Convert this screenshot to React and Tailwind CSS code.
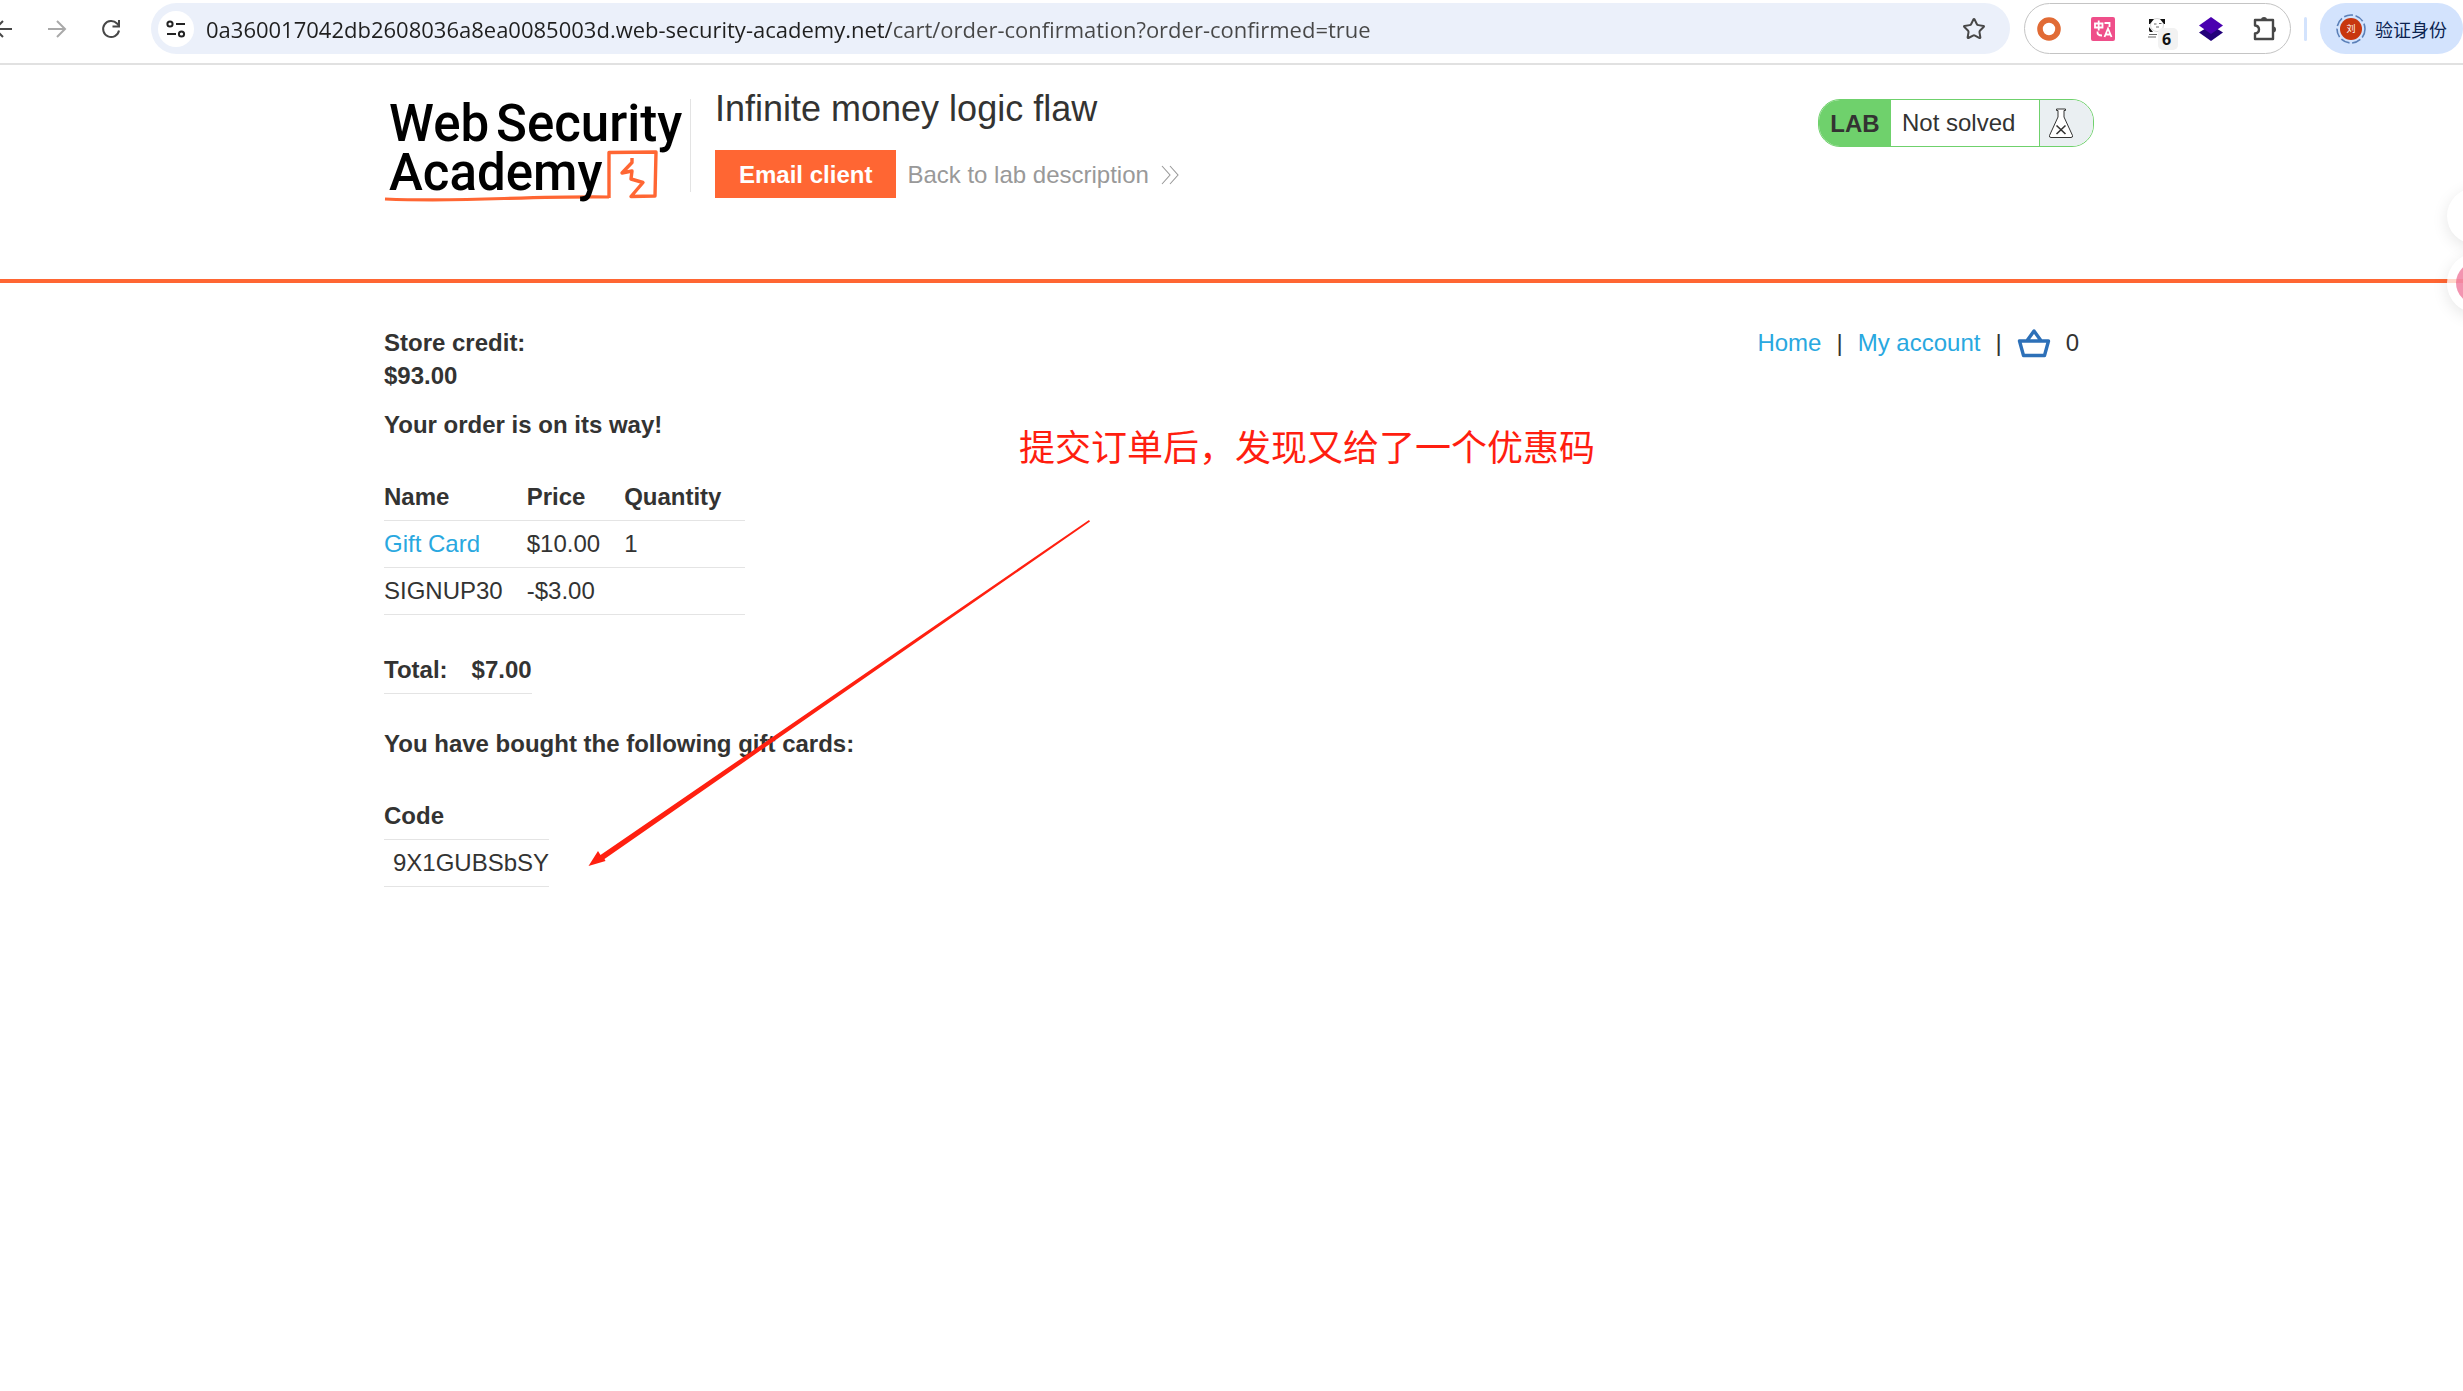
import React from "react";
import { Star } from "lucide-react";

function ArrowIcon({ className, flip }) {
  return (
    <svg viewBox="0 0 20 20" className={className} fill="none" stroke="currentColor" strokeWidth="2">
      {flip ? <path d="M20 10H3M11 2L3 10L11 18" /> : <path d="M1 10H18M10 2L18 10L10 18" />}
    </svg>
  );
}

function ReloadIcon() {
  return (
    <svg viewBox="0 0 20 20" className="size-5" fill="none" stroke="currentColor" strokeWidth="2">
      <path d="M18 11.500A8 8 0 1 1 16 4.500L18 7" />
      <path d="M18 1V7.500H11.500" />
    </svg>
  );
}

function TuneIcon() {
  return (
    <svg viewBox="0 0 20 20" className="size-5" fill="none" stroke="#222" strokeWidth="2">
      <circle cx="4" cy="5" r="2.600" />
      <path d="M10 5H19M1 15H10" />
      <circle cx="15.500" cy="15" r="2.600" />
    </svg>
  );
}

function Toolbar() {
  return (
    <div className="flex h-[65px] items-start overflow-hidden border-b-2 border-[#e1e1e1] bg-white pt-[3px] text-[#474747]">
      <div className="flex h-[51px] w-[151px] shrink-0 items-center">
        <button aria-label="Back" className="-ml-2 w-5 shrink-0"><ArrowIcon className="size-5" flip /></button>
        <button aria-label="Forward" className="ml-[35px] text-[#a9a9a9]"><ArrowIcon className="size-5" /></button>
        <button aria-label="Reload" className="ml-[34px]"><ReloadIcon /></button>
      </div>
      <div className="flex h-[51px] flex-1 items-center rounded-full bg-[#ebf0fa] pr-6 pl-[7px]">
        <button aria-label="Site information" className="flex size-9 items-center justify-center rounded-full bg-white">
          <TuneIcon />
        </button>
        <input
          aria-label="Address"
          readOnly
          className="ml-3 min-w-0 flex-1 bg-[linear-gradient(to_right,#1f1f1f_684px,#474747_684px)] bg-clip-text font-['Open_Sans',sans-serif] text-[22px] text-transparent outline-none"
          defaultValue="0a360017042db2608036a8ea0085003d.web-security-academy.net/cart/order-confirmation?order-confirmed=true"
        />
        <button aria-label="Bookmark this page"><Star className="size-6" strokeWidth={2} strokeLinejoin="miter" /></button>
      </div>
      <div className="ml-[14px] flex h-[51px] w-[267px] items-center gap-[30px] rounded-full border border-[#c4c4c4] pl-3">
        <button aria-label="Recorder">
          <svg viewBox="0 0 24 24" className="size-6"><circle cx="12" cy="12" r="9" fill="#fff" stroke="#e16b35" strokeWidth="5.600" /></svg>
        </button>
        <button aria-label="Translate">
          <svg viewBox="0 0 24 24" className="size-6" fill="none" stroke="#fff" strokeWidth="1.800">
            <rect width="24" height="24" rx="2" fill="#ef4f8a" stroke="none" />
            <path d="M4 6.500H11.500V10.500H4ZM7.700 3.500V13.500M13.500 6H18.500V10M6.500 14.500Q6 18.500 11 18.500M13.500 20L17 11.500L20.500 20M14.500 17.500H19.500" />
          </svg>
        </button>
        <button aria-label="Panda tools, 6" className="mt-2 flex w-6 pl-[3px]">
          <svg viewBox="0 0 30 34" className="h-[34px] w-[30px] shrink-0">
            <circle cx="9" cy="9" r="6.500" fill="#fff" stroke="#bbb" strokeWidth="0.600" />
            <path d="M1 3H6L2 8H1ZM12 3H17V8H16ZM1 11L5 16H2Q1 15 1 14Z" fill="#111" />
            <path d="M6 8H8.500M11 7.500H13.500M8 11H11M1 18.500H9M0 21H8" stroke="#666" strokeWidth="1" />
            <rect x="10" y="12" width="20" height="22" rx="5" fill="#f2f2f2" />
            <text x="18.500" y="29" textAnchor="middle" fontSize="16" fontWeight="700" fontFamily="Open Sans" fill="#111">6</text>
          </svg>
        </button>
        <button aria-label="Layers">
          <svg viewBox="0 0 24 24" className="size-6"><path d="M0 15.500L12 8L24 15.500L12 24Z" fill="#22007a" /><path d="M0 8.500L12 0L24 8.500L12 17Z" fill="#4a00b0" /></svg>
        </button>
        <button aria-label="Extensions">
          <svg viewBox="0 0 24 26" className="h-[26px] w-6">
            <path d="M2 4H20V23H2V17.500Q6 17 6 13.500Q6 10 2 9.500Z" fill="none" stroke="currentColor" strokeWidth="2.400" strokeLinejoin="round" />
            <path d="M8 4A3 3 0 0 1 14 4ZM20 10.500A3 3 0 0 1 20 16.500Z" fill="currentColor" />
          </svg>
        </button>
      </div>
      <div className="mt-[14px] ml-[13px] h-6 w-[3px] rounded-full bg-[#d3e3fd]" />
      <button className="ml-[13px] flex h-[51px] w-[143px] items-center gap-[9px] rounded-full bg-[#d3e3fd] pl-4 font-['Noto_Sans_CJK_SC',sans-serif] text-lg text-[#0b2350]">
        <svg viewBox="0 0 30 30" className="size-[30px] shrink-0">
          <circle cx="15" cy="15" r="14" fill="none" stroke="#5b80b8" strokeWidth="1.600" strokeDasharray="9 2.700" />
          <circle cx="15" cy="15" r="11" fill="#c8370f" />
          <text x="15" y="18" textAnchor="middle" fontSize="9" fontFamily="Noto Sans CJK SC" fill="#fff">刘</text>
        </svg>
        <span className="whitespace-nowrap">验证身份</span>
      </button>
    </div>
  );
}

function AcademyLogo() {
  return (
    <svg viewBox="0 0 304 112" className="h-28 w-[304px]" role="img" aria-label="Web Security Academy">
      <g fontFamily="Roboto" fontWeight="500" fontSize="51" fill="#000">
        <text x="5" y="48">Web</text>
        <text x="112" y="48">Security</text>
      </g>
      <g fill="none" stroke="#ff6633" strokeLinejoin="round">
        <path d="M225 105V59.500L272 59L271 103L247 103.500L259 89.500L247 86L248 78L238 80L248 69.500V65" strokeWidth="3.400" />
        <path d="M1 106Q50 108 120 105.500Q190 103.500 225 104" strokeWidth="3.200" />
      </g>
      <text x="5" y="97" fontFamily="Roboto" fontWeight="500" fontSize="51" fill="#000">Academy</text>
    </svg>
  );
}

function LabHeader() {
  return (
    <header className="h-[218px] border-b-4 border-[#ff6633] pl-[15px]">
      <div className="mx-auto flex max-w-[1710px] items-start pt-7">
        <div className="flex w-[306px] shrink-0 items-start">
          <AcademyLogo />
        </div>
        <div className="mt-[6px] h-[93px] w-px shrink-0 bg-[#e3e3e3]" />
        <div className="ml-6">
          <h2 className="text-4xl leading-8">Infinite money logic flaw</h2>
          <div className="mt-[25px] flex items-center gap-[11px]">
            <button className="h-12 bg-[#ff6633] px-6 pt-px font-bold text-white">Email client</button>
            <a href="#lab" className="flex items-center gap-3 pt-px text-[#999]">
              Back to lab description
              <svg viewBox="0 0 18 20" className="h-5 w-[18px]" fill="none" stroke="#999" strokeWidth="1.100">
                <path d="M1 1L9 10L1 19M9 1L17 10L9 19" />
              </svg>
            </a>
          </div>
        </div>
        <div className="mt-[6px] ml-auto flex h-12 items-stretch overflow-hidden rounded-[22px] border border-[#6fd16c]">
          <p className="flex w-[72px] items-center justify-center bg-[#6fd16c] pt-px font-bold">LAB</p>
          <p className="flex w-[148px] items-center pl-[11px]">Not solved</p>
          <span className="flex w-[54px] items-center border-l border-[#6fd16c] bg-[#eaeff2] pl-[9px]">
            <svg viewBox="0 0 24 30" className="h-[30px] w-6" fill="#fff" stroke="#333332" strokeWidth="1">
              <path d="M7.500 1H16.500V2.500H15V9L23.500 27.500Q24 29.500 22 29.500H2Q0 29.500 0.500 27.500L9 9V2.500H7.500Z" />
              <path d="M7.500 17.500L16.500 26M16.500 17.500L7.500 26" strokeWidth="1.600" />
            </svg>
          </span>
        </div>
      </div>
    </header>
  );
}

const th = "pr-6 pb-[9px] pt-[9px] text-left font-bold";
const td = "pr-6 py-[9px]";
const row = "border-b border-[#e4e4e4]";

export default function App() {
  return (
    <div className="relative min-h-screen overflow-hidden bg-white font-['Liberation_Sans',Arial,sans-serif] text-2xl leading-7 text-[#333332]">
      <Toolbar />
      <LabHeader />
      <main className="pl-[15px]">
        <div className="mx-auto max-w-[1710px] pt-[43px]">
          <div className="flex items-start justify-between">
            <p className="font-bold leading-[33px]">
              Store credit:
              <br />
              $93.00
            </p>
            <nav className="flex items-center gap-[15px] pr-[15px] leading-[33px]">
              <a href="#home" className="text-[#29a8e0]">Home</a>
              <span>|</span>
              <a href="#account" className="text-[#29a8e0]">My account</a>
              <span>|</span>
              <a href="#cart" aria-label="Basket">
                <svg viewBox="0 0 34 30" className="h-[30px] w-[34px]" fill="none" stroke="#2d70b8" strokeWidth="3.400" strokeLinejoin="round" strokeLinecap="round">
                  <path d="M2.500 13H31.500L27.500 27.500H6.500ZM10.500 12L17 3L23.500 12" />
                </svg>
              </a>
              <span>0</span>
            </nav>
          </div>
          <h4 className="mt-[19px] font-bold leading-7">Your order is on its way!</h4>
          <table className="mt-[35px]">
            <thead>
              <tr className={row}>
                <th className={th}>Name</th>
                <th className={th}>Price</th>
                <th className={th}>Quantity</th>
              </tr>
            </thead>
            <tbody>
              <tr className={row}>
                <td className={td}><a href="#gift" className="text-[#29a8e0]">Gift Card</a></td>
                <td className={td}>$10.00</td>
                <td className={td}>1</td>
              </tr>
              <tr className={row}>
                <td className={td}>SIGNUP30</td>
                <td className={td}>-$3.00</td>
                <td className={td}></td>
              </tr>
            </tbody>
          </table>
          <table className="mt-8">
            <tbody>
              <tr className={row}>
                <th className={th}>Total:</th>
                <td className="py-[9px] font-bold">$7.00</td>
              </tr>
            </tbody>
          </table>
          <h4 className="mt-9 font-bold">You have bought the following gift cards:</h4>
          <table className="mt-[35px]">
            <thead>
              <tr className={row}><th className={th}>Code</th></tr>
            </thead>
            <tbody>
              <tr className={row}><td className="py-[9px] pl-[9px]">9X1GUBSbSY</td></tr>
            </tbody>
          </table>
        </div>
      </main>

      <p className="absolute top-[425px] left-[1019px] font-['Noto_Sans_CJK_SC',sans-serif] text-4xl leading-10 whitespace-nowrap text-[#ff1e10]">
        提交订单后，发现又给了一个优惠码
      </p>
      <svg viewBox="0 0 502 347" className="pointer-events-none absolute top-[520px] left-[588px] h-[347px] w-[502px]" fill="#ff2010">
        <path d="M501 0L502 1.500L16.500 339L17.500 341L0.500 346L10 331L12.500 335Z" />
      </svg>
      <div className="absolute top-[188px] -right-10 size-14 rounded-full bg-white shadow-[0_4px_16px_rgba(0,0,0,0.10)]" />
      <div className="absolute top-[253px] -right-11 flex size-[60px] items-center justify-center rounded-full bg-white/75 shadow-[0_4px_16px_rgba(0,0,0,0.10)]">
        <span className="size-[42px] rounded-full bg-[#ed5a85]/65" />
      </div>
    </div>
  );
}
